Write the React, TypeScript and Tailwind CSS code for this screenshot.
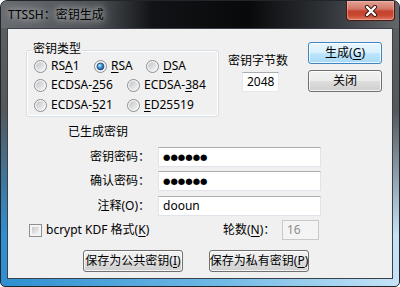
import React from 'react'

const Mn = ({ c }: { c: string }) => (
  <span className="underline underline-offset-[2px] decoration-1">{c}</span>
)

const Radio = ({
  checked,
  className,
  children
}: {
  checked?: boolean
  className?: string
  children: React.ReactNode
}) => (
  <div className={'flex items-center h-[16px] shrink-0 ' + (className ?? '')}>
    <svg width="13" height="13" viewBox="0 0 13 13" className="shrink-0">
      <defs>
        <linearGradient id="rin" x1="0" y1="0" x2="1" y2="1">
          <stop offset="0" stopColor="#bfc2c5" />
          <stop offset="1" stopColor="#f7f7f7" />
        </linearGradient>
        <radialGradient id="rdot" cx="0.38" cy="0.35" r="0.7">
          <stop offset="0" stopColor="#c8f0ff" />
          <stop offset="0.45" stopColor="#3f98d8" />
          <stop offset="1" stopColor="#174f90" />
        </radialGradient>
      </defs>
      <circle cx="6.5" cy="6.5" r="6" fill="#f5f5f5" stroke="#8a8d90" strokeWidth="1" />
      <circle cx="6.5" cy="6.5" r="4.3" fill="url(#rin)" />
      {checked && (
        <circle cx="6.5" cy="6.5" r="3.4" fill="url(#rdot)" stroke="#1b4a80" strokeWidth="0.8" />
      )}
    </svg>
    <span className="ml-[4px] whitespace-nowrap">{children}</span>
  </div>
)

const btn =
  'flex items-center justify-center rounded-[3px] border whitespace-nowrap shadow-[inset_0_0_0_1px_rgba(255,255,255,0.75)]'
const btnGray =
  'border-[#707070] bg-[linear-gradient(to_bottom,#f2f2f2_0%,#ebebeb_48%,#dddddd_52%,#cfcfcf_100%)]'
const btnBlue =
  'border-[#3c86c4] bg-[linear-gradient(to_bottom,#eaf6fd_0%,#d9f0fc_48%,#bee6fd_52%,#a7d9f5_100%)]'

const field =
  'flex items-center h-[20px] bg-white border border-[#e2e3ea] border-t-[#abadb3] px-[4px]'

const dots = "font-[family-name:'DejaVu_Sans'] text-[8.5px] leading-[16px]"

export default function App() {
  return (
    <div className="w-[400px] h-[287px] bg-white font-[family-name:'Noto_Sans','Noto_Sans_CJK_SC',sans-serif] text-[12px] leading-[16px] text-black">
      <div className="relative flex flex-col w-full h-full overflow-hidden rounded-t-[7px] rounded-b-[5px] border border-[#22262a] bg-[linear-gradient(to_bottom,#5b6065_0px,#53585d_110px,rgba(83,88,93,0)_235px),linear-gradient(to_right,#2e8fd0,#6fb9e6_55%,#c6e3f7)]">
        {/* Title bar */}
        <div className="h-[27px] shrink-0 flex items-center pl-[7px] bg-[linear-gradient(to_right,#686c71_0%,#4c5054_24%,#111316_38%,#08090b_62%,#2c2f33_80%,#62666a_100%)]">
          <span className="[text-shadow:0_0_6px_rgba(255,255,255,0.75),0_0_12px_rgba(255,255,255,0.55)]">
            TTSSH：密钥生成
          </span>
        </div>

        <div className="absolute top-0 right-[4px] w-[49px] h-[20px] rounded-b-[4px] border border-t-0 border-[#4a1a12] bg-[linear-gradient(to_bottom,#e3a295_0%,#d4796a_40%,#c4432f_55%,#c9472f_75%,#dc7a62_100%)] shadow-[inset_0_0_0_1px_rgba(255,200,190,0.45)] flex items-center justify-center">
          <svg width="14" height="12" viewBox="0 0 14 12">
            <path d="M3 2 L11 10 M11 2 L3 10" stroke="#3a1610" strokeWidth="4.2" strokeLinecap="round" />
            <path d="M3 2 L11 10 M11 2 L3 10" stroke="#ffffff" strokeWidth="2.4" strokeLinecap="round" />
          </svg>
        </div>

        {/* Client area */}
        <div className="mx-[6px] h-[251px] shrink-0 flex flex-col border border-[#3b4148] bg-[#f0f0f0]">
          <div className="flex items-start">
            <div className="relative ml-[18px] mt-[21px] w-[193px] h-[67px] pl-[7px] pt-[7px] rounded-[3px] border border-[#d5dfe5] shadow-[inset_0_0_0_1px_#ffffff]">
              <span className="absolute left-[5px] top-[-10px] px-[1px] bg-[#f0f0f0]">密钥类型</span>
              <div className="flex">
                <Radio className="w-[60px]">
                  RS<Mn c="A" />1
                </Radio>
                <Radio checked className="w-[52px]">
                  <Mn c="R" />SA
                </Radio>
                <Radio>
                  <Mn c="D" />SA
                </Radio>
              </div>
              <div className="flex mt-[3px]">
                <Radio className="w-[93px]">
                  ECDSA-<Mn c="2" />56
                </Radio>
                <Radio>
                  ECDSA-<Mn c="3" />84
                </Radio>
              </div>
              <div className="flex mt-[4px]">
                <Radio className="w-[93px]">
                  ECDSA-<Mn c="5" />21
                </Radio>
                <Radio>
                  <Mn c="E" />D25519
                </Radio>
              </div>
            </div>

            <div className="ml-[9px] mt-[24px] w-[60px] flex flex-col">
              <span className="whitespace-nowrap">密钥字节数</span>
              <div className={field + ' ml-[14px] mt-[3px] w-[37px] border-[#e3e9ef]'}>2048</div>
            </div>

            <div className="ml-[20px] mt-[13px] flex flex-col gap-[6px]">
              <div className={btn + ' ' + btnBlue + ' w-[74px] h-[22px]'}>
                生成(<Mn c="G" />)
              </div>
              <div className={btn + ' ' + btnGray + ' w-[74px] h-[22px]'}>关闭</div>
            </div>
          </div>

          <div className="ml-[60px] mt-[7px]">已生成密钥</div>

          <div className="flex items-center mt-[7px]">
            <span className="w-[142px] text-right">密钥密码：</span>
            <div className={field + ' ml-[8px] w-[163px]'}>
              <span className={dots}>●●●●●●</span>
            </div>
          </div>
          <div className="flex items-center mt-[4px]">
            <span className="w-[142px] text-right">确认密码：</span>
            <div className={field + ' ml-[8px] w-[163px] border-[#b5cfe7] border-t-[#3d7bad]'}>
              <span className={dots}>●●●●●●</span>
            </div>
          </div>
          <div className="flex items-center mt-[5px]">
            <span className="w-[142px] text-right">注释(O)：</span>
            <div className={field + ' ml-[8px] w-[163px]'}>dooun</div>
          </div>

          <div className="flex items-center mt-[4px] h-[20px]">
            <div className="flex items-center w-[215px] pl-[21px]">
              <div className="w-[13px] h-[13px] border border-[#8e8f8f] bg-[#f4f4f4] p-[2px]">
                <div className="w-full h-full bg-[linear-gradient(135deg,#c6c9cc,#f4f4f4)]" />
              </div>
              <span className="ml-[4px] whitespace-nowrap">
                bcrypt KDF 格式(<Mn c="K" />)
              </span>
            </div>
            <span className="w-[59px] whitespace-nowrap">
              轮数(<Mn c="N" />)：
            </span>
            <div className="flex items-center w-[37px] h-[20px] px-[4px] border border-[#c9c9c9] bg-[#f4f4f4] text-[#8d8d8d]">
              16
            </div>
          </div>

          <div className="flex mt-[10px] ml-[75px] gap-[26px]">
            <div className={btn + ' ' + btnGray + ' w-[100px] h-[22px]'}>
              保存为公共密钥(<Mn c="I" />)
            </div>
            <div className={btn + ' ' + btnGray + ' w-[100px] h-[22px]'}>
              保存为私有密钥(<Mn c="P" />)
            </div>
          </div>
        </div>
      </div>
    </div>
  )
}
